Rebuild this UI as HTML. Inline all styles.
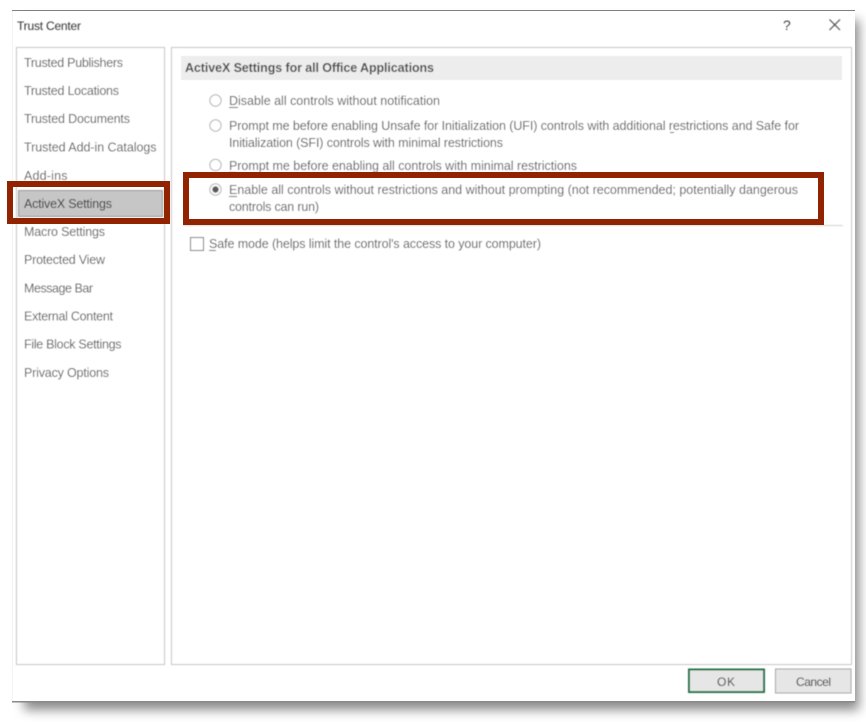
<!DOCTYPE html>
<html><head><meta charset="utf-8"><title>Trust Center</title>
<style>
html,body{margin:0;padding:0;background:#fff;width:866px;height:722px;overflow:hidden}
svg{display:block}
text{font-family:"Liberation Sans",sans-serif;font-size:12.5px;fill:#585858}
.d{fill:#303030}
.t{font-size:12px}
</style></head><body>
<svg width="866" height="722" viewBox="0 0 866 722" xmlns="http://www.w3.org/2000/svg">
<defs>
<filter id="b" x="-10%" y="-10%" width="120%" height="120%"><feGaussianBlur stdDeviation="5.5"/></filter>
<filter id="s" x="-2%" y="-2%" width="104%" height="104%"><feGaussianBlur stdDeviation="0.4"/></filter>
</defs>
<rect x="24" y="20" width="835" height="690" fill="#777" opacity="0.85" filter="url(#b)"/>
<rect x="12" y="10" width="843" height="691" fill="#fff"/>
<rect x="12" y="10" width="843" height="1" fill="#808080"/>
<rect x="12" y="701" width="843" height="1.5" fill="#8a8a8a"/>
<rect x="12" y="11" width="1" height="690" fill="#f4f4f4"/>
<g filter="url(#s)">
<text x="17" y="30" textLength="64" class="d t">Trust Center</text>
<text x="783" y="30" textLength="7" style="font-size:14px;fill:#444">?</text>
<path d="M829.5 19.5L840 30M840 19.5L829.5 30" stroke="#444" stroke-width="1.1" fill="none"/>

<rect x="16.5" y="47.5" width="148" height="617" fill="#fff" stroke="#c4c4c4"/>
<rect x="171.5" y="47.5" width="680" height="617" fill="#fff" stroke="#c4c4c4"/>

<rect x="18.5" y="190.5" width="144" height="26" fill="#c6c6c6" stroke="#8e8e8e"/>
<text x="24" y="67" textLength="99">Trusted Publishers</text>
<text x="24" y="95" textLength="95">Trusted Locations</text>
<text x="24" y="123" textLength="106">Trusted Documents</text>
<text x="24" y="151.5" textLength="132.5">Trusted Add-in Catalogs</text>
<text x="24" y="180" textLength="43.5">Add-ins</text>
<text x="24" y="208" textLength="88" class="d">ActiveX Settings</text>
<text x="24" y="236" textLength="81">Macro Settings</text>
<text x="24" y="264" textLength="81">Protected View</text>
<text x="24" y="292.5" textLength="69">Message Bar</text>
<text x="24" y="320.5" textLength="89">External Content</text>
<text x="24" y="348.5" textLength="97.5">File Block Settings</text>
<text x="24" y="377" textLength="85">Privacy Options</text>

<rect x="181" y="56" width="661" height="24" fill="#ededed"/>
<text x="185" y="72" textLength="249" style="font-weight:bold;fill:#484848">ActiveX Settings for all Office Applications</text>

<g fill="#fff" stroke="#b0b0b0">
<circle cx="215.5" cy="100.5" r="5.7"/>
<circle cx="215.5" cy="125.5" r="5.7"/>
<circle cx="215.5" cy="165" r="5.7"/>
<circle cx="215.5" cy="189.5" r="5.7"/>
</g>
<circle cx="215.5" cy="189.5" r="3.2" fill="#5a5a5a"/>

<text x="229" y="105" textLength="211">Disable all controls without notification</text>
<text x="229" y="130" textLength="570">Prompt me before enabling Unsafe for Initialization (UFI) controls with additional restrictions and Safe for</text>
<text x="229" y="147" textLength="274">Initialization (SFI) controls with minimal restrictions</text>
<text x="229" y="170" textLength="348">Prompt me before enabling all controls with minimal restrictions</text>
<text x="229" y="194" textLength="569">Enable all controls without restrictions and without prompting (not recommended; potentially dangerous</text>
<text x="229" y="211" textLength="90">controls can run)</text>
<text x="209" y="248" textLength="332">Safe mode (helps limit the control's access to your computer)</text>
<g fill="#585858">
<rect x="229" y="107" width="9" height="1"/>
<rect x="229" y="172" width="7" height="1"/>
<rect x="229" y="196" width="8" height="1"/>
<rect x="209" y="250" width="7" height="1"/>
<rect x="670" y="132" width="4" height="1"/>
</g>

<rect x="183" y="225" width="660" height="1" fill="#d0d0d0"/>
<rect x="190.5" y="237.5" width="13" height="13" fill="#fff" stroke="#666"/>

<rect x="689" y="669.5" width="75" height="22.5" fill="#e6e6e6" stroke="#217346" stroke-width="2"/>
<text x="717" y="686" textLength="18" class="d t">OK</text>
<rect x="775.5" y="669" width="75.5" height="24" fill="#e6e6e6" stroke="#a4a4a4"/>
<text x="796" y="686" textLength="35" class="d t">Cancel</text>
</g>
<rect x="10" y="184" width="157" height="37" fill="none" stroke="#922300" stroke-width="6"/>
<rect x="186" y="175" width="635" height="47" fill="none" stroke="#922300" stroke-width="6"/>
</svg>
</body></html>
